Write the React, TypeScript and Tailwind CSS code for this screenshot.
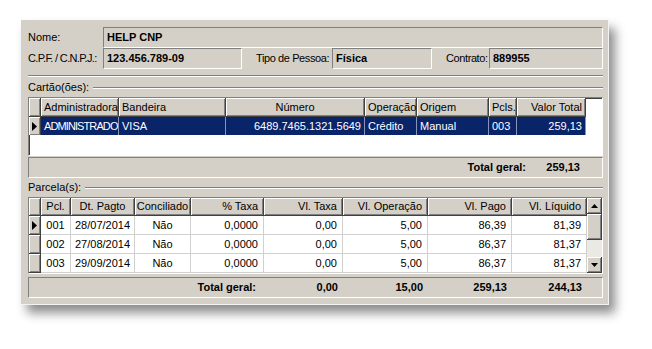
import React from "react";

const font = { fontFamily: '"Liberation Sans", Arial, sans-serif' };

const hdr =
  "h-full flex items-center px-[3px] bg-[#d4d0c8] border-r border-b border-[#404040] shadow-[inset_1px_1px_0_#fff,inset_-1px_-1px_0_#808080] overflow-hidden whitespace-nowrap shrink-0";

const field =
  "h-full flex items-center pl-[3px] font-bold border border-t-[#808080] border-l-[#808080] border-r-white border-b-white";

const Etched = ({ className = "" }: { className?: string }) => (
  <div className={`h-[2px] border-t border-t-[#808080] border-b border-b-white ${className}`} />
);

const Arrow = () => (
  <svg width="5" height="9" viewBox="0 0 5 9">
    <path d="M0 0 L5 4.5 L0 9 Z" fill="#000" />
  </svg>
);

const cards = [
  { w: "w-[78px]", label: "Administradora", value: "ADMINISTRADO", align: "justify-start", tight: true },
  { w: "w-[107px]", label: "Bandeira", value: "VISA", align: "justify-start" },
  { w: "w-[139px]", label: "Número", value: "6489.7465.1321.5649", align: "justify-end", hAlign: "justify-center" },
  { w: "w-[52px]", label: "Operação", value: "Crédito", align: "justify-start" },
  { w: "w-[72px]", label: "Origem", value: "Manual", align: "justify-start" },
  { w: "w-[28px]", label: "Pcls.", value: "003", align: "justify-start" },
  { w: "w-[69px]", label: "Valor Total", value: "259,13", align: "justify-end" },
];

const cols = [
  { w: "w-[30px]", label: "Pcl.", align: "justify-center" },
  { w: "w-[64px]", label: "Dt. Pagto", align: "justify-center" },
  { w: "w-[56px]", label: "Conciliado", align: "justify-center" },
  { w: "w-[73px]", label: "% Taxa", align: "justify-end" },
  { w: "w-[79px]", label: "Vl. Taxa", align: "justify-end" },
  { w: "w-[85px]", label: "Vl. Operação", align: "justify-end" },
  { w: "w-[84px]", label: "Vl. Pago", align: "justify-end" },
  { w: "w-[75px]", label: "Vl. Líquido", align: "justify-end" },
];

const parcelas = [
  ["001", "28/07/2014", "Não", "0,0000", "0,00", "5,00", "86,39", "81,39"],
  ["002", "27/08/2014", "Não", "0,0000", "0,00", "5,00", "86,37", "81,37"],
  ["003", "29/09/2014", "Não", "0,0000", "0,00", "5,00", "86,37", "81,37"],
];

const totals = [
  { w: "w-[79px]", v: "0,00" },
  { w: "w-[85px]", v: "15,00" },
  { w: "w-[84px]", v: "259,13" },
  { w: "w-[75px]", v: "244,13" },
];

export default function App() {
  return (
    <div className="w-[652px] h-[349px] bg-white pt-[20px] pl-[21px] text-[11px] text-black" style={font}>
      <div className="w-[588px] flex flex-col bg-[#d4d0c8] pt-[7px] pb-[6px] pl-[7px] pr-[5px] border-r border-b border-[#f4f3f0] shadow-[6px_8px_10px_rgba(0,0,0,0.45)]">
        {/* Cliente */}
        <div className="h-[21px] flex items-center">
          <div className="w-[75px] shrink-0">Nome:</div>
          <div className={`${field} flex-1`}>HELP CNP</div>
        </div>
        <div className="h-[21px] flex items-center">
          <div className="w-[75px] shrink-0 whitespace-nowrap tracking-[-0.65px]">C.P.F. / C.N.P.J.:</div>
          <div className={`${field} w-[139px] shrink-0`}>123.456.789-09</div>
          <div className="ml-[14px] w-[76px] shrink-0 whitespace-nowrap tracking-[-0.4px]">Tipo de Pessoa:</div>
          <div className={`${field} w-[100px] shrink-0`}>Física</div>
          <div className="ml-[14px] w-[43px] shrink-0 whitespace-nowrap tracking-[-0.4px]">Contrato:</div>
          <div className={`${field} flex-1`}>889955</div>
        </div>

        <Etched className="mt-[6px]" />

        {/* Cartões */}
        <div className="mt-[4px] h-[13px] flex items-center gap-[4px]">
          <span className="whitespace-nowrap">Cartão(ões):</span>
          <Etched className="flex-1" />
        </div>
        <div className="mt-[3px] h-[59px] flex flex-col bg-white border border-t-[#808080] border-l-[#808080] border-r-white border-b-white shadow-[inset_1px_1px_0_#404040]">
          <div className="h-[19px] flex shrink-0">
            <div className={`${hdr} w-[12px]`} />
            {cards.map((c) => (
              <div key={c.label} className={`${hdr} ${c.w} ${c.hAlign ?? c.align}`}>
                {c.label}
              </div>
            ))}
          </div>
          <div className="h-[18px] flex shrink-0">
            <div className="w-[12px] h-full flex items-center justify-center bg-[#d4d0c8] border-r border-[#404040] shadow-[inset_1px_1px_0_#fff,inset_-1px_-1px_0_#808080]">
              <Arrow />
            </div>
            {cards.map((c) => (
              <div
                key={c.label}
                className={`${c.w} h-full flex items-center ${c.align} px-[3px] bg-[#0a246a] text-white border-r border-[#8a94b8] overflow-hidden whitespace-nowrap shrink-0 ${c.tight ? "tracking-[-0.9px]" : ""}`}
              >
                {c.value}
              </div>
            ))}
          </div>
        </div>
        <div className="mt-[1px] h-[21px] flex items-center justify-end pr-[22px] font-bold border border-t-[#808080] border-l-[#808080] border-r-white border-b-white">
          <span>Total geral:</span>
          <span className="w-[54px] text-right">259,13</span>
        </div>

        {/* Parcelas */}
        <div className="mt-[3px] h-[13px] flex items-center gap-[4px]">
          <span className="whitespace-nowrap">Parcela(s):</span>
          <Etched className="flex-1" />
        </div>
        <div className="mt-[3px] h-[77px] flex bg-white border border-t-[#808080] border-l-[#808080] border-r-white border-b-white shadow-[inset_1px_1px_0_#404040]">
          <div className="flex flex-col">
            <div className="h-[18px] flex">
              <div className={`${hdr} w-[12px]`} />
              {cols.map((c) => (
                <div key={c.label} className={`${hdr} ${c.w} ${c.align} ${c.align === "justify-end" ? "pr-[5px]" : ""}`}>
                  {c.label}
                </div>
              ))}
            </div>
            {parcelas.map((row, i) => (
              <div key={row[0]} className="h-[19px] flex">
                <div className="w-[12px] h-full flex items-center justify-center bg-[#d4d0c8] border-r border-b border-[#404040] shadow-[inset_1px_1px_0_#fff,inset_-1px_-1px_0_#808080]">
                  {i === 0 && <Arrow />}
                </div>
                {cols.map((c, j) => (
                  <div
                    key={c.label}
                    className={`${c.w} h-full flex items-center ${c.align} px-[3px] ${c.align === "justify-end" ? "pr-[5px]" : ""} border-r border-b border-[#d0d0d0] whitespace-nowrap shrink-0`}
                  >
                    {row[j]}
                  </div>
                ))}
              </div>
            ))}
          </div>
          {/* Scrollbar */}
          <div className="w-[16px] flex flex-col bg-[#ebe9e4]">
            <div className="h-[16px] flex items-center justify-center bg-[#d4d0c8] border-r border-b border-[#404040] shadow-[inset_1px_1px_0_#fff,inset_-1px_-1px_0_#808080]">
              <svg width="7" height="4" viewBox="0 0 7 4">
                <path d="M3.5 0 L7 4 L0 4 Z" fill="#000" />
              </svg>
            </div>
            <div className="h-[26px] bg-[#d4d0c8] border-r border-b border-[#404040] shadow-[inset_1px_1px_0_#fff,inset_-1px_-1px_0_#808080]" />
            <div className="flex-1" />
            <div className="h-[16px] flex items-center justify-center bg-[#d4d0c8] border-r border-b border-[#404040] shadow-[inset_1px_1px_0_#fff,inset_-1px_-1px_0_#808080]">
              <svg width="7" height="4" viewBox="0 0 7 4">
                <path d="M0 0 L7 0 L3.5 4 Z" fill="#000" />
              </svg>
            </div>
          </div>
        </div>
        <div className="mt-[3px] h-[21px] flex items-center font-bold border border-t-[#808080] border-l-[#808080] border-r-white border-b-white">
          <div className="w-[162px] shrink-0" />
          <div className="w-[73px] shrink-0 text-right pr-[8px] whitespace-nowrap">Total geral:</div>
          {totals.map((t) => (
            <div key={t.v} className={`${t.w} shrink-0 text-right pr-[5px]`}>
              {t.v}
            </div>
          ))}
        </div>
      </div>
    </div>
  );
}
